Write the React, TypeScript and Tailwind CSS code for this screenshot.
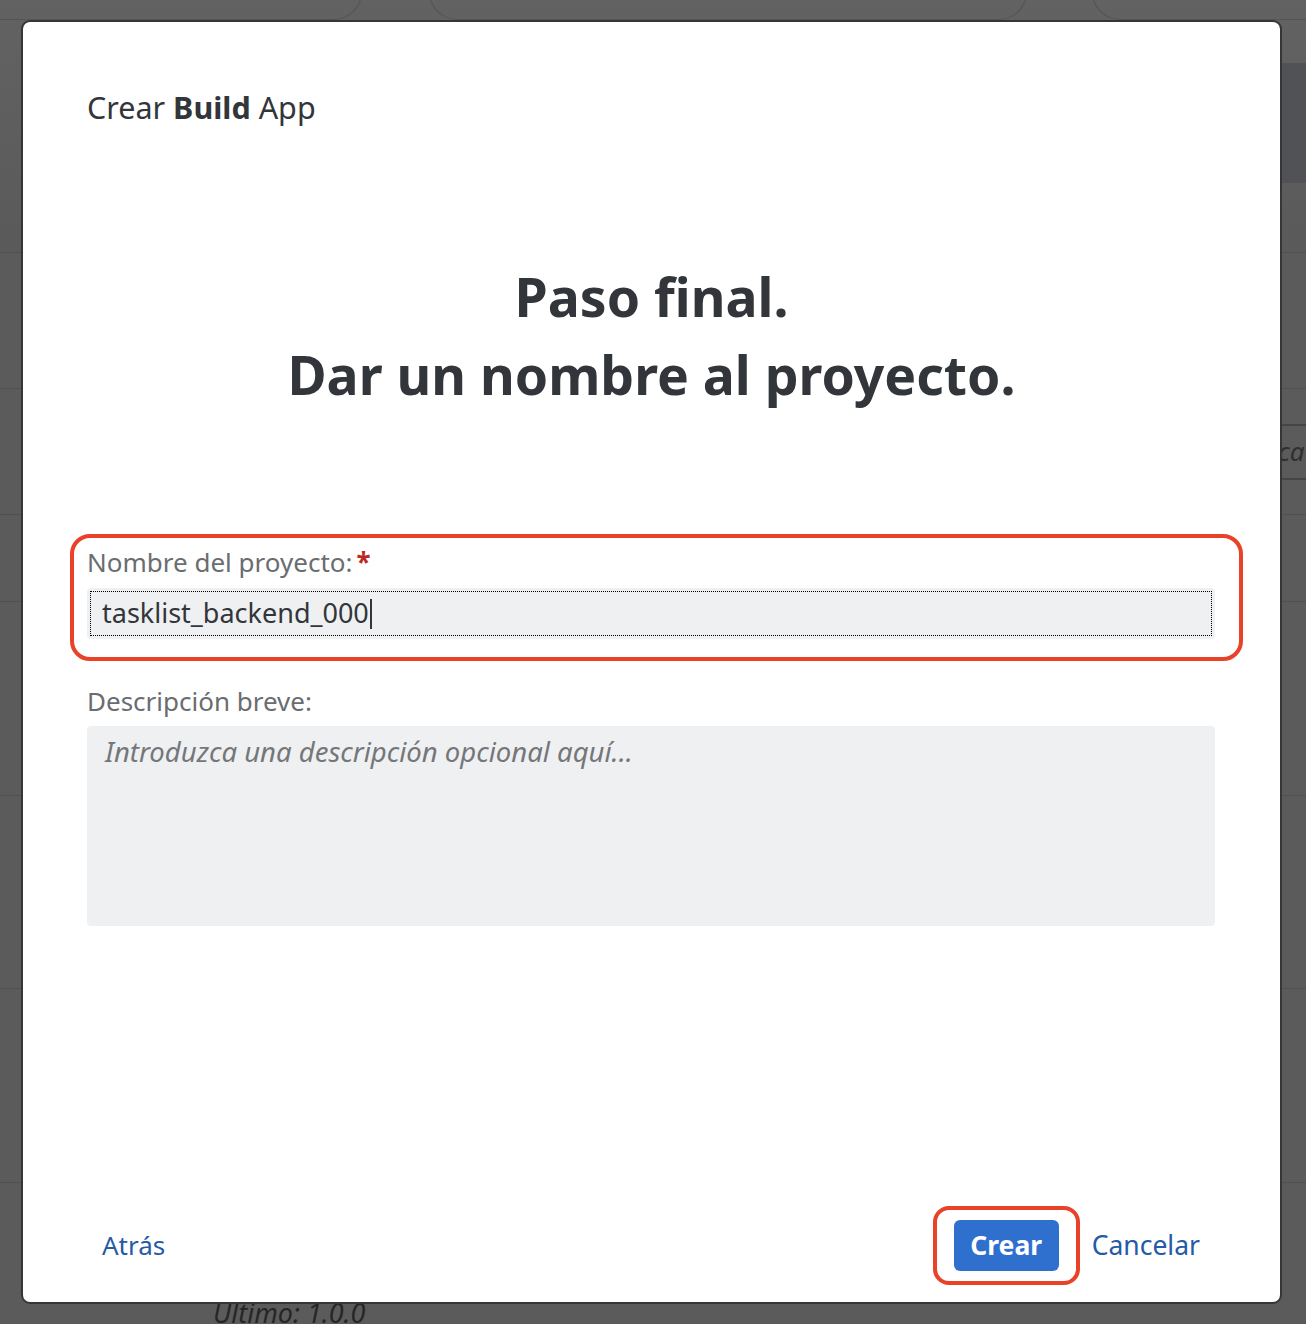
import React from "react";

const font = { fontFamily: '"Noto Sans", "Open Sans", Arial, sans-serif' };

const BackgroundPage = () => {
  return (
    <div className="w-full h-[1324px] bg-[#5b5b5b] overflow-hidden flex flex-col">
      <div className="shrink-0 h-[253px] border-b border-[#505050] flex flex-col bg-gradient-to-b from-[#626262] to-[#5a5a5a]">
        <div className="flex h-[40px] -mt-[20px]">
          <div className="w-[362px] border-r border-b border-[#545454] rounded-br-[28px]" />
          <div className="ml-[67px] w-[598px] border-x border-b border-[#545454] rounded-b-[28px]" />
          <div className="ml-[65px] flex-1 border-l border-b border-[#545454] rounded-bl-[28px]" />
        </div>
        <div className="mt-[43px] h-[120px] bg-[#505255] ml-auto w-[40px]" />
      </div>
      <div className="shrink-0 h-[136px] border-b border-[#505050]" />
      <div className="shrink-0 h-[126px] border-b border-[#505050] flex items-center justify-end">
        <div className="w-[26px] h-[56px] border-y-2 border-[#454545] overflow-hidden flex items-center">
          <span className="italic text-[26px] text-[#2f2f2f] -ml-[2px] whitespace-nowrap" style={font}>
            ca
          </span>
        </div>
      </div>
      <div className="shrink-0 h-[87px] border-b border-[#505050]" />
      <div className="shrink-0 h-[194px] border-b border-[#505050]" />
      <div className="shrink-0 h-[193px] border-b border-[#505050]" />
      <div className="shrink-0 h-[194px] border-b border-[#505050]" />
      <div className="shrink-0 pl-[213px] pt-[115px]">
        <span className="italic text-[27px] leading-[30px] text-[#262626] whitespace-nowrap" style={font}>
          Último: 1.0.0
        </span>
      </div>
    </div>
  );
};

const Dialog = () => {
  return (
    <div
      className="absolute left-[21px] top-[20px] w-[1261px] h-[1284px] bg-white border-2 border-[#363636] rounded-[9px] flex flex-col"
      style={font}
    >
      <div className="pl-[64px] pt-[67px]">
        <h1 className="text-[30.5px] leading-[36px] text-[#32363a]">
          Crear <span className="font-bold">Build</span> App
        </h1>
      </div>

      <div className="mt-[133px] flex flex-col items-center text-[#32363a] font-bold text-[53.5px] leading-[78px]">
        <span>Paso final.</span>
        <span>Dar un nombre al proyecto.</span>
      </div>

      <div className="ml-[47px] mt-[120px] w-[1173px] border-[4.5px] border-[#ea4228] rounded-[20px] pl-[13px] pr-[24px] pt-[8px] pb-[18px]">
        <label className="block text-[26px] leading-[32px] text-[#6a6d70]">
          Nombre del proyecto:<span className="text-[#bb2a22] font-bold ml-[4px]">*</span>
        </label>
        <div className="mt-[10px] h-[51px] bg-[#eff0f2] rounded-[4px] p-[3px]">
          <div className="h-full border border-dotted border-black flex items-center pl-[11px]">
            <span className="text-[27px] text-[#32363a]">tasklist_backend_000</span>
            <span className="w-[2px] h-[30px] bg-[#32363a] ml-[1px]" />
          </div>
        </div>
      </div>

      <div className="pl-[64px] mt-[24px]">
        <label className="block text-[26px] leading-[32px] text-[#6a6d70]">Descripción breve:</label>
        <div className="mt-[9px] w-[1128px] h-[200px] bg-[#eff0f2] rounded-[4px] pl-[18px] pt-[8px]">
          <span className="italic text-[27.5px] leading-[36px] text-[#74777a]">
            Introduzca una descripción opcional aquí...
          </span>
        </div>
      </div>

      <div className="mt-auto pb-[17px] pl-[64px] pr-[80px] flex items-center justify-between">
        <button className="px-[15px] text-[26px] text-[#245aa6]">Atrás</button>
        <div className="flex items-center">
          <div className="border-[4px] border-[#ea4228] rounded-[16px] px-[17px] py-[10px]">
            <button className="w-[105px] h-[51px] rounded-[6px] bg-[#2f70cf] text-white font-bold text-[26.5px]">
              Crear
            </button>
          </div>
          <button className="ml-[12px] text-[26.5px] text-[#245aa6]">Cancelar</button>
        </div>
      </div>
    </div>
  );
};

export default function App() {
  return (
    <div className="relative w-[1306px] h-[1324px] overflow-hidden">
      <BackgroundPage />
      <Dialog />
    </div>
  );
}
